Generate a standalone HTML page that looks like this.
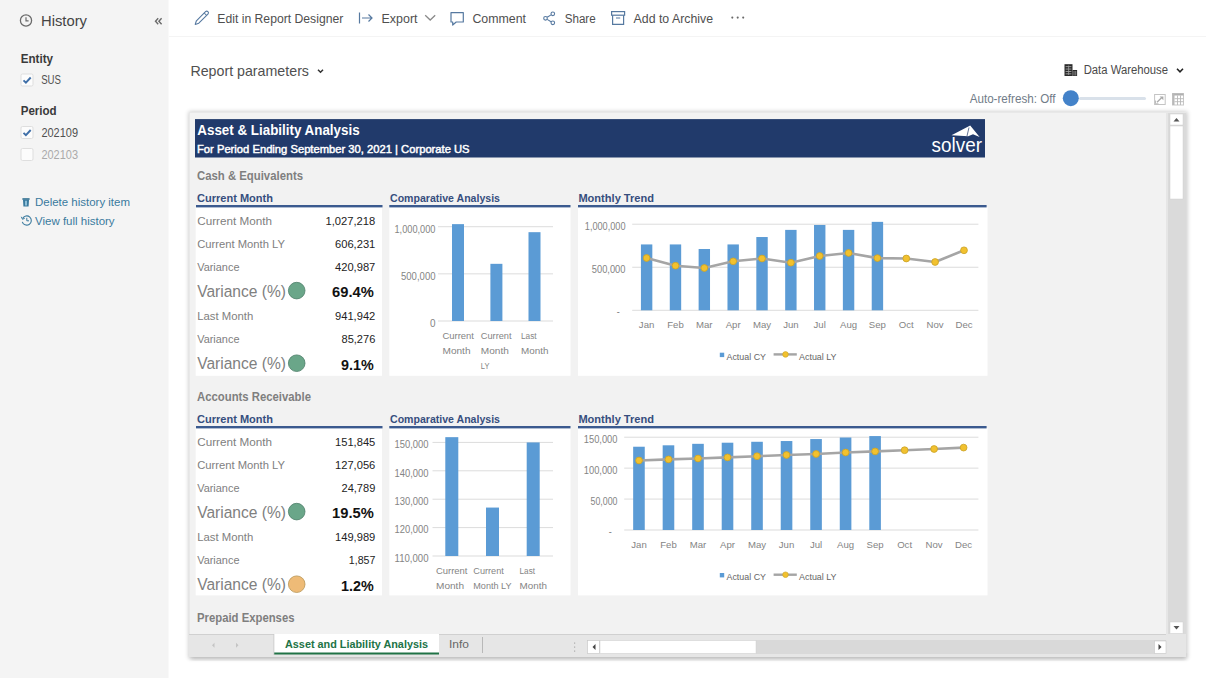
<!DOCTYPE html>
<html><head><meta charset="utf-8"><title>History</title>
<style>
html,body{margin:0;padding:0;background:#fff;width:1206px;height:678px;overflow:hidden}
svg{display:block;font-family:"Liberation Sans", sans-serif}
</style></head><body>
<svg width="1206" height="678" viewBox="0 0 1206 678">
<rect x="0" y="0" width="168.5" height="678" fill="#f4f4f4"/>
<circle cx="26" cy="20.5" r="5.6" fill="none" stroke="#6b6b6b" stroke-width="1.3"/>
<path d="M26 17.3V20.8H28.6" fill="none" stroke="#6b6b6b" stroke-width="1.2"/>
<text x="41.0" y="26.3" font-size="15" fill="#444" font-weight="normal" text-anchor="start" textLength="46.0" lengthAdjust="spacingAndGlyphs">History</text>
<path d="M158.2 18.2L155.5 21.2L158.2 24.2M161.6 18.2L158.9 21.2L161.6 24.2" fill="none" stroke="#6a6a6a" stroke-width="1.4"/>
<text x="20.7" y="63.0" font-size="12.5" fill="#3a3a3a" font-weight="bold" text-anchor="start" textLength="32.3" lengthAdjust="spacingAndGlyphs">Entity</text>
<rect x="21.0" y="74.0" width="12" height="12" rx="1.5" fill="#fcfcfc" stroke="#dedede" stroke-width="1"/>
<path d="M23.5 80.3L25.9 82.7L30.7 77.5" fill="none" stroke="#3f6fa8" stroke-width="1.9"/>
<text x="41.2" y="84.0" font-size="12" fill="#505050" font-weight="normal" text-anchor="start" textLength="19.8" lengthAdjust="spacingAndGlyphs">SUS</text>
<text x="20.7" y="115.0" font-size="12.5" fill="#3a3a3a" font-weight="bold" text-anchor="start" textLength="36.0" lengthAdjust="spacingAndGlyphs">Period</text>
<rect x="21.0" y="126.5" width="12" height="12" rx="1.5" fill="#fcfcfc" stroke="#dedede" stroke-width="1"/>
<path d="M23.5 132.8L25.9 135.2L30.7 130" fill="none" stroke="#3f6fa8" stroke-width="1.9"/>
<text x="41.4" y="136.5" font-size="12" fill="#505050" font-weight="normal" text-anchor="start" textLength="36.6" lengthAdjust="spacingAndGlyphs">202109</text>
<rect x="21.0" y="148.5" width="12" height="12" rx="1.5" fill="#fcfcfc" stroke="#dedede" stroke-width="1"/>
<text x="41.4" y="158.5" font-size="12" fill="#aaa" font-weight="normal" text-anchor="start" textLength="36.6" lengthAdjust="spacingAndGlyphs">202103</text>
<path d="M22.4 198.2H29.6V199.8H22.4Z" fill="#2f6f8f"/><path d="M23 199.8H29L28.6 206.5H23.4Z" fill="#3a7a9e"/><path d="M25 200.8H27V205.5H25Z" fill="#8fc0d8"/>
<text x="35.0" y="206.0" font-size="11.5" fill="#3a7a9e" font-weight="normal" text-anchor="start" textLength="95.0" lengthAdjust="spacingAndGlyphs">Delete history item</text>
<path d="M22.6 218.5A4.6 4.6 0 1 1 22.3 221.8" fill="none" stroke="#3a7a9e" stroke-width="1.1"/><path d="M21.3 216.8L22.5 219.3L24.8 218.2" fill="none" stroke="#3a7a9e" stroke-width="1"/><path d="M26.8 217.8V220.8H29" fill="none" stroke="#3a7a9e" stroke-width="1"/>
<text x="35.0" y="225.0" font-size="11.5" fill="#3a7a9e" font-weight="normal" text-anchor="start" textLength="79.6" lengthAdjust="spacingAndGlyphs">View full history</text>
<rect x="169" y="36" width="1037" height="1" fill="#f4f4f4"/>
<g transform="translate(195.2 24.4) rotate(-45)"><path d="M0 0L3.4 -1.7H16.3A1.7 1.7 0 0 1 16.3 1.7H3.4Z" fill="#fff" stroke="#5679a0" stroke-width="1.1" stroke-linejoin="round"/><path d="M14.4 -1.7V1.7" stroke="#5679a0" stroke-width="1"/></g>
<text x="217.3" y="22.9" font-size="12.5" fill="#4f4f4f" font-weight="normal" text-anchor="start" textLength="126.0" lengthAdjust="spacingAndGlyphs">Edit in Report Designer</text>
<path d="M359.5 12.5V23.5M362 18H372M368.5 14.5L372 18L368.5 21.5" fill="none" stroke="#5679a0" stroke-width="1.2"/>
<text x="381.5" y="22.9" font-size="12.5" fill="#4f4f4f" font-weight="normal" text-anchor="start" textLength="36.0" lengthAdjust="spacingAndGlyphs">Export</text>
<path d="M425.2 15.2L430.2 20L435.2 15.2" fill="none" stroke="#8a8a8a" stroke-width="1.3"/>
<path d="M451 12.6H463.3V22H456.2L452.7 25V22H451Z" fill="none" stroke="#5679a0" stroke-width="1.2" stroke-linejoin="round"/>
<text x="472.4" y="22.9" font-size="12.5" fill="#4f4f4f" font-weight="normal" text-anchor="start" textLength="53.6" lengthAdjust="spacingAndGlyphs">Comment</text>
<circle cx="545.5" cy="18.3" r="1.8" fill="none" stroke="#5679a0" stroke-width="1.1"/><circle cx="552.8" cy="13.8" r="1.8" fill="none" stroke="#5679a0" stroke-width="1.1"/><circle cx="552.8" cy="22.8" r="1.8" fill="none" stroke="#5679a0" stroke-width="1.1"/><path d="M547.2 17.2L551 14.9M547.2 19.4L551 21.7" stroke="#5679a0" stroke-width="1.1"/>
<text x="564.7" y="22.9" font-size="12.5" fill="#4f4f4f" font-weight="normal" text-anchor="start" textLength="31.0" lengthAdjust="spacingAndGlyphs">Share</text>
<rect x="611.6" y="11.6" width="13" height="3.6" fill="none" stroke="#5679a0" stroke-width="1.2"/><path d="M612.6 15.2V24.4H623.6V15.2M616 18H620.2" fill="none" stroke="#5679a0" stroke-width="1.2"/>
<text x="633.6" y="22.9" font-size="12.5" fill="#4f4f4f" font-weight="normal" text-anchor="start" textLength="79.4" lengthAdjust="spacingAndGlyphs">Add to Archive</text>
<circle cx="732.3" cy="17.6" r="1.05" fill="#6a6a6a"/>
<circle cx="737.7" cy="17.6" r="1.05" fill="#6a6a6a"/>
<circle cx="743.2" cy="17.6" r="1.05" fill="#6a6a6a"/>
<text x="190.4" y="76.0" font-size="15" fill="#505050" font-weight="normal" text-anchor="start" textLength="118.6" lengthAdjust="spacingAndGlyphs">Report parameters</text>
<path d="M318 69.8L320.5 72.3L323 69.8" fill="none" stroke="#333" stroke-width="1.5"/>
<g fill="#2a2a2a"><rect x="1064.5" y="64.2" width="8" height="11.8"/><rect x="1072.5" y="70" width="4.6" height="6"/></g><g fill="#fff" opacity="0.55"><rect x="1065.6" y="66.2" width="5.8" height="0.9"/><rect x="1065.6" y="68.6" width="5.8" height="0.9"/><rect x="1065.6" y="71" width="5.8" height="0.9"/><rect x="1065.6" y="73.4" width="5.8" height="0.9"/><rect x="1068.3" y="65.5" width="0.8" height="9.5"/><rect x="1073.6" y="71" width="0.8" height="4.5"/><rect x="1075.4" y="71" width="0.8" height="4.5"/></g>
<text x="1083.7" y="74.4" font-size="12.5" fill="#4a4a4a" font-weight="normal" text-anchor="start" textLength="84.3" lengthAdjust="spacingAndGlyphs">Data Warehouse</text>
<path d="M1177 68.8L1180 71.8L1183 68.8" fill="none" stroke="#222" stroke-width="1.6"/>
<text x="969.7" y="102.6" font-size="12.5" fill="#717c88" font-weight="normal" text-anchor="start" textLength="85.8" lengthAdjust="spacingAndGlyphs">Auto-refresh: Off</text>
<rect x="1079" y="97" width="67" height="3" rx="1.5" fill="#d9e1ea"/>
<circle cx="1070.8" cy="98.2" r="8" fill="#4382c9"/>
<rect x="1154.6" y="94.5" width="10.6" height="10" fill="#fff" stroke="#c4c4c4" stroke-width="1"/><path d="M1157 102.3L1161.8 97.5" stroke="#aaa" stroke-width="1.3"/><path d="M1159.6 96.4H1163.4V100.2Z" fill="#aaa"/><path d="M1155.5 100.5V103.8H1158.5" fill="none" stroke="#bbb" stroke-width="1"/>
<rect x="1172.5" y="93.5" width="11" height="11.5" fill="#fff" stroke="#c8c8c8" stroke-width="1"/><rect x="1172.5" y="93.5" width="11" height="2" fill="#b0b0b0"/><rect x="1172.5" y="93.5" width="2" height="11.5" fill="#b8b8b8"/><g stroke="#b8b8b8" stroke-width="0.9"><path d="M1174.5 98.7H1183.5M1174.5 101.7H1183.5M1177.5 95.5V105M1180.5 95.5V105"/></g>
<defs><filter id="sh" x="-5%" y="-5%" width="110%" height="110%"><feGaussianBlur stdDeviation="2.2"/></filter></defs>
<rect x="188.5" y="111.5" width="999" height="547" fill="#000" opacity="0.2" filter="url(#sh)"/><rect x="191" y="654" width="995" height="6" fill="#000" opacity="0.12" filter="url(#sh)"/>
<rect x="189" y="112" width="997" height="545" fill="#e8e8e8"/>
<rect x="190" y="113" width="976" height="521" fill="#f2f2f2"/>
<rect x="1166" y="113" width="20" height="521" fill="#e6e6e6"/>
<rect x="1168" y="113" width="18" height="521" fill="#dadada"/>
<rect x="1170" y="114" width="13" height="11" fill="#fff" stroke="#d0d0d0" stroke-width="0.5"/>
<path d="M1173.5 121.5L1176.5 118L1179.5 121.5Z" fill="#555"/>
<rect x="1170" y="126" width="13" height="73" fill="#fff" stroke="#d0d0d0" stroke-width="0.5"/>
<rect x="1170" y="622" width="13" height="11.5" fill="#fff" stroke="#d0d0d0" stroke-width="0.5"/>
<path d="M1173.5 626L1176.5 629.5L1179.5 626Z" fill="#555"/>
<rect x="189" y="634" width="997" height="23" fill="#e6e6e6"/>
<rect x="189" y="634" width="977" height="1" fill="#d0d0d0"/>
<path d="M214.5 642.8L212 645.3L214.5 647.8Z M236 642.8L238.5 645.3L236 647.8Z" fill="#c4c4c4"/>
<rect x="274" y="634" width="165" height="20" fill="#fff"/>
<rect x="274" y="652.5" width="165" height="2" fill="#217346"/>
<rect x="273.5" y="634" width="0.8" height="21" fill="#c8c8c8"/>
<text x="285.0" y="648.3" font-size="11.5" fill="#217346" font-weight="bold" text-anchor="start" textLength="143.0" lengthAdjust="spacingAndGlyphs">Asset and Liability Analysis</text>
<text x="449.0" y="648.3" font-size="11.5" fill="#666" font-weight="normal" text-anchor="start" textLength="20.0" lengthAdjust="spacingAndGlyphs">Info</text>
<rect x="482" y="637" width="1" height="16" fill="#b8b8b8"/>
<rect x="574" y="642.5" width="1.2" height="1.2" fill="#aaa"/>
<rect x="574" y="646.5" width="1.2" height="1.2" fill="#aaa"/>
<rect x="574" y="650.5" width="1.2" height="1.2" fill="#aaa"/>
<rect x="587" y="640" width="579" height="14" fill="#d9d9d9"/>
<rect x="587.5" y="640.5" width="12" height="13" fill="#fff" stroke="#c8c8c8" stroke-width="0.6"/>
<path d="M595.5 644L592.5 647L595.5 650Z" fill="#444"/>
<rect x="600" y="640.5" width="156" height="13" fill="#fff" stroke="#d0d0d0" stroke-width="0.5"/>
<rect x="1154.5" y="641" width="11.5" height="12.5" fill="#fff" stroke="#c8c8c8" stroke-width="0.6"/>
<path d="M1158.5 644L1161.5 647L1158.5 650Z" fill="#444"/>
<rect x="195" y="119.1" width="790" height="38.4" fill="#213a6b"/>
<text x="197.3" y="134.6" font-size="14.5" fill="#fff" font-weight="bold" text-anchor="start" textLength="162.3" lengthAdjust="spacingAndGlyphs">Asset &amp; Liability Analysis</text>
<text x="197.0" y="152.6" font-size="11" fill="#fff" font-weight="normal" text-anchor="start" textLength="272.6" lengthAdjust="spacingAndGlyphs" stroke="#fff" stroke-width="0.45">For Period Ending September 30, 2021 | Corporate US</text>
<text x="931.6" y="152.0" font-size="20" fill="#fff" font-weight="normal" text-anchor="start" textLength="50.4" lengthAdjust="spacingAndGlyphs" font-weight="normal">solver</text>
<path d="M951.5 135.2L970.2 125.5L979.6 137L973 134.3L968.2 136.2Z" fill="#fff"/><path d="M969 127.5L967 136" stroke="#213a6b" stroke-width="0.7"/>
<text x="197.0" y="179.5" font-size="12" fill="#7f7f7f" font-weight="bold" text-anchor="start" textLength="106.0" lengthAdjust="spacingAndGlyphs">Cash &amp; Equivalents</text>
<rect x="195.7" y="207" width="186.3" height="168.8" fill="#fff"/>
<rect x="389.3" y="207" width="181.2" height="168.8" fill="#fff"/>
<rect x="578" y="207" width="409.5" height="168.8" fill="#fff"/>
<text x="197.0" y="202.2" font-size="11" fill="#364e7e" font-weight="bold" text-anchor="start" textLength="76.0" lengthAdjust="spacingAndGlyphs">Current Month</text>
<rect x="196" y="205" width="186.5" height="2.4" fill="#3b5a8f"/>
<text x="390.0" y="201.9" font-size="11" fill="#364e7e" font-weight="bold" text-anchor="start" textLength="110.0" lengthAdjust="spacingAndGlyphs">Comparative Analysis</text>
<rect x="389.3" y="205" width="181.2" height="2.4" fill="#3b5a8f"/>
<text x="578.4" y="201.9" font-size="11" fill="#364e7e" font-weight="bold" text-anchor="start" textLength="75.6" lengthAdjust="spacingAndGlyphs">Monthly Trend</text>
<rect x="578" y="205" width="408.6" height="2.4" fill="#3b5a8f"/>
<text x="197.2" y="224.6" font-size="11" fill="#808080" font-weight="normal" text-anchor="start" textLength="74.8" lengthAdjust="spacingAndGlyphs">Current Month</text>
<text x="375.3" y="224.6" font-size="11" fill="#222" font-weight="normal" text-anchor="end" textLength="49.8" lengthAdjust="spacingAndGlyphs">1,027,218</text>
<text x="197.2" y="248.0" font-size="11" fill="#808080" font-weight="normal" text-anchor="start" textLength="87.8" lengthAdjust="spacingAndGlyphs">Current Month LY</text>
<text x="375.3" y="248.0" font-size="11" fill="#222" font-weight="normal" text-anchor="end" textLength="40.3" lengthAdjust="spacingAndGlyphs">606,231</text>
<text x="197.2" y="270.8" font-size="11" fill="#808080" font-weight="normal" text-anchor="start" textLength="42.3" lengthAdjust="spacingAndGlyphs">Variance</text>
<text x="375.3" y="270.8" font-size="11" fill="#222" font-weight="normal" text-anchor="end" textLength="40.3" lengthAdjust="spacingAndGlyphs">420,987</text>
<text x="197.2" y="296.8" font-size="16.8" fill="#808080" font-weight="normal" text-anchor="start" textLength="88.8" lengthAdjust="spacingAndGlyphs">Variance (%)</text>
<circle cx="296.7" cy="290.6" r="8.3" fill="#6aa689" stroke="#4d7d68" stroke-width="0.8"/>
<text x="373.8" y="297.4" font-size="15" fill="#111" font-weight="bold" text-anchor="end" textLength="41.7" lengthAdjust="spacingAndGlyphs">69.4%</text>
<text x="197.2" y="320.0" font-size="11" fill="#808080" font-weight="normal" text-anchor="start" textLength="56.0" lengthAdjust="spacingAndGlyphs">Last Month</text>
<text x="375.3" y="320.0" font-size="11" fill="#222" font-weight="normal" text-anchor="end" textLength="40.3" lengthAdjust="spacingAndGlyphs">941,942</text>
<text x="197.2" y="343.2" font-size="11" fill="#808080" font-weight="normal" text-anchor="start" textLength="42.3" lengthAdjust="spacingAndGlyphs">Variance</text>
<text x="375.3" y="343.2" font-size="11" fill="#222" font-weight="normal" text-anchor="end" textLength="33.8" lengthAdjust="spacingAndGlyphs">85,276</text>
<text x="197.2" y="369.4" font-size="16.8" fill="#808080" font-weight="normal" text-anchor="start" textLength="88.8" lengthAdjust="spacingAndGlyphs">Variance (%)</text>
<circle cx="296.7" cy="363.2" r="8.3" fill="#6aa689" stroke="#4d7d68" stroke-width="0.8"/>
<text x="373.8" y="370.0" font-size="15" fill="#111" font-weight="bold" text-anchor="end" textLength="32.7" lengthAdjust="spacingAndGlyphs">9.1%</text>
<rect x="438" y="320.5" width="115" height="1" fill="#dcdcdc"/>
<text x="435.5" y="326.8" font-size="10" fill="#848484" font-weight="normal" text-anchor="end" textLength="5.5" lengthAdjust="spacingAndGlyphs">0</text>
<rect x="438" y="273.35" width="115" height="1" fill="#dcdcdc"/>
<text x="435.5" y="279.7" font-size="10" fill="#848484" font-weight="normal" text-anchor="end" textLength="34.5" lengthAdjust="spacingAndGlyphs">500,000</text>
<rect x="438" y="226.2" width="115" height="1" fill="#dcdcdc"/>
<text x="435.5" y="232.5" font-size="10" fill="#848484" font-weight="normal" text-anchor="end" textLength="41.0" lengthAdjust="spacingAndGlyphs">1,000,000</text>
<rect x="452" y="224.1333426" width="12" height="96.8666574" fill="#5b9bd5"/>
<rect x="490.4" y="263.8324167" width="12" height="57.1675833" fill="#5b9bd5"/>
<rect x="528.5" y="232.1748694" width="12" height="88.8251306" fill="#5b9bd5"/>
<text x="442.5" y="338.7" font-size="9.2" fill="#848484" font-weight="normal" text-anchor="start" textLength="31.5" lengthAdjust="spacingAndGlyphs">Current</text>
<text x="480.8" y="338.7" font-size="9.2" fill="#848484" font-weight="normal" text-anchor="start" textLength="30.7" lengthAdjust="spacingAndGlyphs">Current</text>
<text x="521.0" y="338.7" font-size="9.2" fill="#848484" font-weight="normal" text-anchor="start" textLength="15.6" lengthAdjust="spacingAndGlyphs">Last</text>
<text x="442.5" y="354.2" font-size="9.2" fill="#848484" font-weight="normal" text-anchor="start" textLength="28.0" lengthAdjust="spacingAndGlyphs">Month</text>
<text x="480.8" y="354.2" font-size="9.2" fill="#848484" font-weight="normal" text-anchor="start" textLength="28.0" lengthAdjust="spacingAndGlyphs">Month</text>
<text x="521.0" y="354.2" font-size="9.2" fill="#848484" font-weight="normal" text-anchor="start" textLength="27.4" lengthAdjust="spacingAndGlyphs">Month</text>
<text x="480.8" y="369.2" font-size="9.2" fill="#848484" font-weight="normal" text-anchor="start" textLength="8.6" lengthAdjust="spacingAndGlyphs">LY</text>
<rect x="632.2" y="309.8" width="346.19999999999993" height="1" fill="#dcdcdc"/>
<text x="619.7" y="315.3" font-size="10" fill="#848484" font-weight="normal" text-anchor="end" textLength="3.0" lengthAdjust="spacingAndGlyphs">-</text>
<rect x="632.2" y="266.75" width="346.19999999999993" height="1" fill="#dcdcdc"/>
<text x="625.5" y="273.1" font-size="10" fill="#848484" font-weight="normal" text-anchor="end" textLength="33.7" lengthAdjust="spacingAndGlyphs">500,000</text>
<rect x="632.2" y="223.70000000000002" width="346.19999999999993" height="1" fill="#dcdcdc"/>
<text x="625.5" y="230.0" font-size="10" fill="#848484" font-weight="normal" text-anchor="end" textLength="40.7" lengthAdjust="spacingAndGlyphs">1,000,000</text>
<rect x="640.925" y="244.43350000000004" width="11.4" height="65.86649999999999" fill="#5b9bd5"/>
<rect x="669.775" y="244.43350000000004" width="11.4" height="65.86649999999999" fill="#5b9bd5"/>
<rect x="698.625" y="248.9968" width="11.4" height="61.3032" fill="#5b9bd5"/>
<rect x="727.475" y="244.43350000000004" width="11.4" height="65.86649999999999" fill="#5b9bd5"/>
<rect x="756.325" y="237.02890000000002" width="11.4" height="73.27109999999999" fill="#5b9bd5"/>
<rect x="785.175" y="229.88260000000002" width="11.4" height="80.41739999999999" fill="#5b9bd5"/>
<rect x="814.025" y="224.97490000000002" width="11.4" height="85.32509999999999" fill="#5b9bd5"/>
<rect x="842.875" y="229.88260000000002" width="11.4" height="80.41739999999999" fill="#5b9bd5"/>
<rect x="871.7249999999999" y="221.8565302" width="11.4" height="88.44346979999999" fill="#5b9bd5"/>
<polyline points="646.6,258.0 675.5,265.7 704.3,268.0 733.2,261.3 762.0,258.5 790.9,262.7 819.7,256.0 848.6,253.0 877.4,258.1 906.3,258.5 935.1,262.0 964.0,250.3" fill="none" stroke="#a5a5a5" stroke-width="2.6" stroke-linejoin="round"/>
<circle cx="646.6" cy="258.0" r="3.4" fill="#f2c12e" stroke="#c9a227" stroke-width="0.8"/>
<circle cx="675.5" cy="265.7" r="3.4" fill="#f2c12e" stroke="#c9a227" stroke-width="0.8"/>
<circle cx="704.3" cy="268.0" r="3.4" fill="#f2c12e" stroke="#c9a227" stroke-width="0.8"/>
<circle cx="733.2" cy="261.3" r="3.4" fill="#f2c12e" stroke="#c9a227" stroke-width="0.8"/>
<circle cx="762.0" cy="258.5" r="3.4" fill="#f2c12e" stroke="#c9a227" stroke-width="0.8"/>
<circle cx="790.9" cy="262.7" r="3.4" fill="#f2c12e" stroke="#c9a227" stroke-width="0.8"/>
<circle cx="819.7" cy="256.0" r="3.4" fill="#f2c12e" stroke="#c9a227" stroke-width="0.8"/>
<circle cx="848.6" cy="253.0" r="3.4" fill="#f2c12e" stroke="#c9a227" stroke-width="0.8"/>
<circle cx="877.4" cy="258.1" r="3.4" fill="#f2c12e" stroke="#c9a227" stroke-width="0.8"/>
<circle cx="906.3" cy="258.5" r="3.4" fill="#f2c12e" stroke="#c9a227" stroke-width="0.8"/>
<circle cx="935.1" cy="262.0" r="3.4" fill="#f2c12e" stroke="#c9a227" stroke-width="0.8"/>
<circle cx="964.0" cy="250.3" r="3.4" fill="#f2c12e" stroke="#c9a227" stroke-width="0.8"/>
<text x="646.6" y="327.6" font-size="9.6" fill="#848484" font-weight="normal" text-anchor="middle">Jan</text>
<text x="675.5" y="327.6" font-size="9.6" fill="#848484" font-weight="normal" text-anchor="middle">Feb</text>
<text x="704.3" y="327.6" font-size="9.6" fill="#848484" font-weight="normal" text-anchor="middle">Mar</text>
<text x="733.2" y="327.6" font-size="9.6" fill="#848484" font-weight="normal" text-anchor="middle">Apr</text>
<text x="762.0" y="327.6" font-size="9.6" fill="#848484" font-weight="normal" text-anchor="middle">May</text>
<text x="790.9" y="327.6" font-size="9.6" fill="#848484" font-weight="normal" text-anchor="middle">Jun</text>
<text x="819.7" y="327.6" font-size="9.6" fill="#848484" font-weight="normal" text-anchor="middle">Jul</text>
<text x="848.6" y="327.6" font-size="9.6" fill="#848484" font-weight="normal" text-anchor="middle">Aug</text>
<text x="877.4" y="327.6" font-size="9.6" fill="#848484" font-weight="normal" text-anchor="middle">Sep</text>
<text x="906.3" y="327.6" font-size="9.6" fill="#848484" font-weight="normal" text-anchor="middle">Oct</text>
<text x="935.1" y="327.6" font-size="9.6" fill="#848484" font-weight="normal" text-anchor="middle">Nov</text>
<text x="964.0" y="327.6" font-size="9.6" fill="#848484" font-weight="normal" text-anchor="middle">Dec</text>
<rect x="719.8" y="352.7" width="4.4" height="4.4" fill="#5b9bd5"/>
<text x="726.5" y="360.1" font-size="9.3" fill="#666" font-weight="normal" text-anchor="start" textLength="39.5" lengthAdjust="spacingAndGlyphs">Actual CY</text>
<rect x="773.6" y="353.2" width="23.2" height="2.4" fill="#a5a5a5"/>
<circle cx="785.5" cy="354.4" r="2.8" fill="#f2c12e" stroke="#c9a227" stroke-width="0.6"/>
<text x="799.0" y="360.1" font-size="9.3" fill="#666" font-weight="normal" text-anchor="start" textLength="37.5" lengthAdjust="spacingAndGlyphs">Actual LY</text>
<text x="197.0" y="400.5" font-size="12" fill="#7f7f7f" font-weight="bold" text-anchor="start" textLength="114.0" lengthAdjust="spacingAndGlyphs">Accounts Receivable</text>
<rect x="195.7" y="428" width="186.3" height="167.4" fill="#fff"/>
<rect x="389.3" y="428" width="181.2" height="167.4" fill="#fff"/>
<rect x="578" y="428" width="409.5" height="167.4" fill="#fff"/>
<text x="197.0" y="423.2" font-size="11" fill="#364e7e" font-weight="bold" text-anchor="start" textLength="76.0" lengthAdjust="spacingAndGlyphs">Current Month</text>
<rect x="196" y="426" width="186.5" height="2.4" fill="#3b5a8f"/>
<text x="390.0" y="422.9" font-size="11" fill="#364e7e" font-weight="bold" text-anchor="start" textLength="110.0" lengthAdjust="spacingAndGlyphs">Comparative Analysis</text>
<rect x="389.3" y="426" width="181.2" height="2.4" fill="#3b5a8f"/>
<text x="578.4" y="422.9" font-size="11" fill="#364e7e" font-weight="bold" text-anchor="start" textLength="75.6" lengthAdjust="spacingAndGlyphs">Monthly Trend</text>
<rect x="578" y="426" width="408.6" height="2.4" fill="#3b5a8f"/>
<text x="197.2" y="445.6" font-size="11" fill="#808080" font-weight="normal" text-anchor="start" textLength="74.8" lengthAdjust="spacingAndGlyphs">Current Month</text>
<text x="375.3" y="445.6" font-size="11" fill="#222" font-weight="normal" text-anchor="end" textLength="40.3" lengthAdjust="spacingAndGlyphs">151,845</text>
<text x="197.2" y="469.0" font-size="11" fill="#808080" font-weight="normal" text-anchor="start" textLength="87.8" lengthAdjust="spacingAndGlyphs">Current Month LY</text>
<text x="375.3" y="469.0" font-size="11" fill="#222" font-weight="normal" text-anchor="end" textLength="40.3" lengthAdjust="spacingAndGlyphs">127,056</text>
<text x="197.2" y="491.8" font-size="11" fill="#808080" font-weight="normal" text-anchor="start" textLength="42.3" lengthAdjust="spacingAndGlyphs">Variance</text>
<text x="375.3" y="491.8" font-size="11" fill="#222" font-weight="normal" text-anchor="end" textLength="33.8" lengthAdjust="spacingAndGlyphs">24,789</text>
<text x="197.2" y="517.8" font-size="16.8" fill="#808080" font-weight="normal" text-anchor="start" textLength="88.8" lengthAdjust="spacingAndGlyphs">Variance (%)</text>
<circle cx="296.7" cy="511.6" r="8.3" fill="#6aa689" stroke="#4d7d68" stroke-width="0.8"/>
<text x="373.8" y="518.4" font-size="15" fill="#111" font-weight="bold" text-anchor="end" textLength="41.7" lengthAdjust="spacingAndGlyphs">19.5%</text>
<text x="197.2" y="541.0" font-size="11" fill="#808080" font-weight="normal" text-anchor="start" textLength="56.0" lengthAdjust="spacingAndGlyphs">Last Month</text>
<text x="375.3" y="541.0" font-size="11" fill="#222" font-weight="normal" text-anchor="end" textLength="40.3" lengthAdjust="spacingAndGlyphs">149,989</text>
<text x="197.2" y="564.2" font-size="11" fill="#808080" font-weight="normal" text-anchor="start" textLength="42.3" lengthAdjust="spacingAndGlyphs">Variance</text>
<text x="375.3" y="564.2" font-size="11" fill="#222" font-weight="normal" text-anchor="end" textLength="26.5" lengthAdjust="spacingAndGlyphs">1,857</text>
<text x="197.2" y="590.4" font-size="16.8" fill="#808080" font-weight="normal" text-anchor="start" textLength="88.8" lengthAdjust="spacingAndGlyphs">Variance (%)</text>
<circle cx="296.7" cy="584.2" r="8.3" fill="#eebb77" stroke="#b89555" stroke-width="0.8"/>
<text x="373.8" y="591.0" font-size="15" fill="#111" font-weight="bold" text-anchor="end" textLength="32.7" lengthAdjust="spacingAndGlyphs">1.2%</text>
<rect x="432.5" y="555.5" width="120.5" height="1" fill="#dcdcdc"/>
<text x="428.5" y="561.8" font-size="10" fill="#848484" font-weight="normal" text-anchor="end" textLength="34.0" lengthAdjust="spacingAndGlyphs">110,000</text>
<rect x="432.5" y="527.1" width="120.5" height="1" fill="#dcdcdc"/>
<text x="428.5" y="533.4" font-size="10" fill="#848484" font-weight="normal" text-anchor="end" textLength="34.0" lengthAdjust="spacingAndGlyphs">120,000</text>
<rect x="432.5" y="498.7" width="120.5" height="1" fill="#dcdcdc"/>
<text x="428.5" y="505.0" font-size="10" fill="#848484" font-weight="normal" text-anchor="end" textLength="34.0" lengthAdjust="spacingAndGlyphs">130,000</text>
<rect x="432.5" y="470.3" width="120.5" height="1" fill="#dcdcdc"/>
<text x="428.5" y="476.6" font-size="10" fill="#848484" font-weight="normal" text-anchor="end" textLength="34.0" lengthAdjust="spacingAndGlyphs">140,000</text>
<rect x="432.5" y="441.9" width="120.5" height="1" fill="#dcdcdc"/>
<text x="428.5" y="448.2" font-size="10" fill="#848484" font-weight="normal" text-anchor="end" textLength="34.0" lengthAdjust="spacingAndGlyphs">150,000</text>
<rect x="445.3" y="437.16020000000003" width="13" height="118.83979999999997" fill="#5b9bd5"/>
<rect x="486.0" y="507.56096" width="13" height="48.43903999999998" fill="#5b9bd5"/>
<rect x="526.7" y="442.43124" width="13" height="113.56876" fill="#5b9bd5"/>
<text x="436.0" y="573.5" font-size="9.2" fill="#848484" font-weight="normal" text-anchor="start" textLength="31.5" lengthAdjust="spacingAndGlyphs">Current</text>
<text x="473.3" y="573.5" font-size="9.2" fill="#848484" font-weight="normal" text-anchor="start" textLength="30.5" lengthAdjust="spacingAndGlyphs">Current</text>
<text x="519.6" y="573.5" font-size="9.2" fill="#848484" font-weight="normal" text-anchor="start" textLength="15.4" lengthAdjust="spacingAndGlyphs">Last</text>
<text x="436.0" y="588.7" font-size="9.2" fill="#848484" font-weight="normal" text-anchor="start" textLength="28.0" lengthAdjust="spacingAndGlyphs">Month</text>
<text x="473.3" y="588.7" font-size="9.2" fill="#848484" font-weight="normal" text-anchor="start" textLength="38.2" lengthAdjust="spacingAndGlyphs">Month LY</text>
<text x="519.6" y="588.7" font-size="9.2" fill="#848484" font-weight="normal" text-anchor="start" textLength="27.4" lengthAdjust="spacingAndGlyphs">Month</text>
<rect x="624.2" y="529.5" width="354.19999999999993" height="1" fill="#dcdcdc"/>
<text x="611.7" y="535.0" font-size="10" fill="#848484" font-weight="normal" text-anchor="end" textLength="3.0" lengthAdjust="spacingAndGlyphs">-</text>
<rect x="624.2" y="498.56666666666666" width="354.19999999999993" height="1" fill="#dcdcdc"/>
<text x="617.5" y="504.9" font-size="10" fill="#848484" font-weight="normal" text-anchor="end" textLength="27.0" lengthAdjust="spacingAndGlyphs">50,000</text>
<rect x="624.2" y="467.6333333333333" width="354.19999999999993" height="1" fill="#dcdcdc"/>
<text x="617.5" y="473.9" font-size="10" fill="#848484" font-weight="normal" text-anchor="end" textLength="33.7" lengthAdjust="spacingAndGlyphs">100,000</text>
<rect x="624.2" y="436.7" width="354.19999999999993" height="1" fill="#dcdcdc"/>
<text x="617.5" y="443.0" font-size="10" fill="#848484" font-weight="normal" text-anchor="end" textLength="33.7" lengthAdjust="spacingAndGlyphs">150,000</text>
<rect x="633.1583333333334" y="446.72746666666666" width="11.6" height="83.27253333333333" fill="#5b9bd5"/>
<rect x="662.6750000000001" y="445.3045333333333" width="11.6" height="84.69546666666666" fill="#5b9bd5"/>
<rect x="692.1916666666667" y="443.8197333333333" width="11.6" height="86.18026666666667" fill="#5b9bd5"/>
<rect x="721.7083333333334" y="442.70613333333336" width="11.6" height="87.29386666666667" fill="#5b9bd5"/>
<rect x="751.2250000000001" y="441.77813333333336" width="11.6" height="88.22186666666667" fill="#5b9bd5"/>
<rect x="780.7416666666668" y="441.0357333333333" width="11.6" height="88.96426666666667" fill="#5b9bd5"/>
<rect x="810.2583333333334" y="439.056" width="11.6" height="90.944" fill="#5b9bd5"/>
<rect x="839.7750000000001" y="437.5093333333333" width="11.6" height="92.49066666666667" fill="#5b9bd5"/>
<rect x="869.2916666666667" y="436.05856" width="11.6" height="93.94144" fill="#5b9bd5"/>
<polyline points="639.0,460.5 668.5,459.4 698.0,458.5 727.5,457.4 757.0,456.2 786.5,455.0 816.1,454.0 845.6,452.5 875.1,451.4 904.6,450.2 934.1,449.0 963.6,447.6" fill="none" stroke="#a5a5a5" stroke-width="2.6" stroke-linejoin="round"/>
<circle cx="639.0" cy="460.5" r="3.4" fill="#f2c12e" stroke="#c9a227" stroke-width="0.8"/>
<circle cx="668.5" cy="459.4" r="3.4" fill="#f2c12e" stroke="#c9a227" stroke-width="0.8"/>
<circle cx="698.0" cy="458.5" r="3.4" fill="#f2c12e" stroke="#c9a227" stroke-width="0.8"/>
<circle cx="727.5" cy="457.4" r="3.4" fill="#f2c12e" stroke="#c9a227" stroke-width="0.8"/>
<circle cx="757.0" cy="456.2" r="3.4" fill="#f2c12e" stroke="#c9a227" stroke-width="0.8"/>
<circle cx="786.5" cy="455.0" r="3.4" fill="#f2c12e" stroke="#c9a227" stroke-width="0.8"/>
<circle cx="816.1" cy="454.0" r="3.4" fill="#f2c12e" stroke="#c9a227" stroke-width="0.8"/>
<circle cx="845.6" cy="452.5" r="3.4" fill="#f2c12e" stroke="#c9a227" stroke-width="0.8"/>
<circle cx="875.1" cy="451.4" r="3.4" fill="#f2c12e" stroke="#c9a227" stroke-width="0.8"/>
<circle cx="904.6" cy="450.2" r="3.4" fill="#f2c12e" stroke="#c9a227" stroke-width="0.8"/>
<circle cx="934.1" cy="449.0" r="3.4" fill="#f2c12e" stroke="#c9a227" stroke-width="0.8"/>
<circle cx="963.6" cy="447.6" r="3.4" fill="#f2c12e" stroke="#c9a227" stroke-width="0.8"/>
<text x="639.0" y="547.8" font-size="9.6" fill="#848484" font-weight="normal" text-anchor="middle">Jan</text>
<text x="668.5" y="547.8" font-size="9.6" fill="#848484" font-weight="normal" text-anchor="middle">Feb</text>
<text x="698.0" y="547.8" font-size="9.6" fill="#848484" font-weight="normal" text-anchor="middle">Mar</text>
<text x="727.5" y="547.8" font-size="9.6" fill="#848484" font-weight="normal" text-anchor="middle">Apr</text>
<text x="757.0" y="547.8" font-size="9.6" fill="#848484" font-weight="normal" text-anchor="middle">May</text>
<text x="786.5" y="547.8" font-size="9.6" fill="#848484" font-weight="normal" text-anchor="middle">Jun</text>
<text x="816.1" y="547.8" font-size="9.6" fill="#848484" font-weight="normal" text-anchor="middle">Jul</text>
<text x="845.6" y="547.8" font-size="9.6" fill="#848484" font-weight="normal" text-anchor="middle">Aug</text>
<text x="875.1" y="547.8" font-size="9.6" fill="#848484" font-weight="normal" text-anchor="middle">Sep</text>
<text x="904.6" y="547.8" font-size="9.6" fill="#848484" font-weight="normal" text-anchor="middle">Oct</text>
<text x="934.1" y="547.8" font-size="9.6" fill="#848484" font-weight="normal" text-anchor="middle">Nov</text>
<text x="963.6" y="547.8" font-size="9.6" fill="#848484" font-weight="normal" text-anchor="middle">Dec</text>
<rect x="719.8" y="573.0" width="4.4" height="4.4" fill="#5b9bd5"/>
<text x="726.5" y="580.4" font-size="9.3" fill="#666" font-weight="normal" text-anchor="start" textLength="39.5" lengthAdjust="spacingAndGlyphs">Actual CY</text>
<rect x="773.6" y="573.5" width="23.2" height="2.4" fill="#a5a5a5"/>
<circle cx="785.5" cy="574.7" r="2.8" fill="#f2c12e" stroke="#c9a227" stroke-width="0.6"/>
<text x="799.0" y="580.4" font-size="9.3" fill="#666" font-weight="normal" text-anchor="start" textLength="37.5" lengthAdjust="spacingAndGlyphs">Actual LY</text>
<text x="197.0" y="621.5" font-size="12" fill="#7f7f7f" font-weight="bold" text-anchor="start" textLength="97.5" lengthAdjust="spacingAndGlyphs">Prepaid Expenses</text>
</svg>
</body></html>
